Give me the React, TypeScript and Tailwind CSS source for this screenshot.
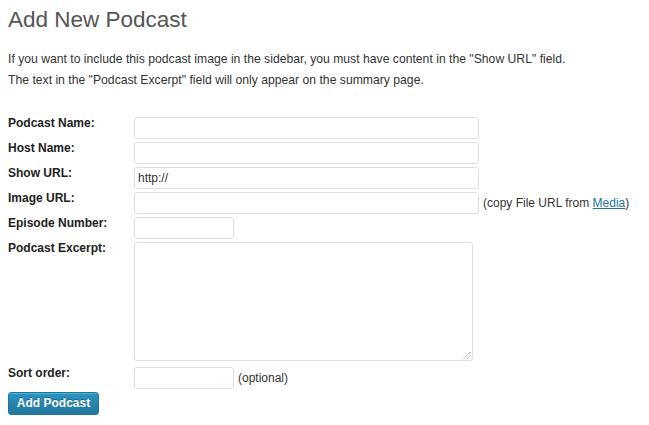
import React from "react";

const inputCls =
  "h-[22px] rounded-[3px] border border-[#dfdfdf] bg-white px-[3px] text-[12px] text-[#333] outline-none";

function Row({
  label,
  children,
  className = "h-[25px]",
}: {
  label: string;
  children: React.ReactNode;
  className?: string;
}) {
  return (
    <div className={`flex items-start ${className}`}>
      <div className="w-[126px] shrink-0 text-[12px] font-bold leading-[16px] text-[#222]">
        {label}
      </div>
      <div className="mt-[2px] flex items-center">{children}</div>
    </div>
  );
}

export default function App() {
  return (
    <div className="min-h-screen bg-white pl-[8px] font-['Liberation_Sans',Arial,sans-serif] text-[#333]">
      <h2 className="pt-[5px] text-[22.5px] font-normal leading-[29px] text-[#555]">
        Add New Podcast
      </h2>

      <div className="mt-[15px] text-[12.2px] leading-[21px]">
        <p>
          If you want to include this podcast image in the sidebar, you must have
          content in the "Show URL" field.
        </p>
        <p>The text in the "Podcast Excerpt" field will only appear on the summary page.</p>
      </div>

      <form className="mt-[24px]" onSubmit={(e) => e.preventDefault()}>
        <Row label="Podcast Name:">
          <input className={`${inputCls} w-[345px]`} />
        </Row>
        <Row label="Host Name:">
          <input className={`${inputCls} w-[345px]`} />
        </Row>
        <Row label="Show URL:">
          <input className={`${inputCls} w-[345px]`} defaultValue="http://" />
        </Row>
        <Row label="Image URL:">
          <input className={`${inputCls} w-[345px]`} />
          <span className="ml-[4px] text-[12px] text-[#333]">
            (copy File URL from{" "}
            <a href="#" className="text-[#21759b] underline">
              Media
            </a>
            )
          </span>
        </Row>
        <Row label="Episode Number:">
          <input className={`${inputCls} w-[100px]`} />
        </Row>
        <Row label="Podcast Excerpt:" className="h-[125px]">
          <div className="relative">
            <textarea className="block h-[119px] w-[339px] resize-none rounded-[3px] border border-[#dfdfdf] bg-white p-[3px] text-[12px] outline-none" />
            <svg
              className="pointer-events-none absolute bottom-[2px] right-[2px]"
              width="8"
              height="8"
              viewBox="0 0 8 8"
            >
              <line x1="1" y1="7.5" x2="7.5" y2="1" stroke="#555" strokeWidth="1" strokeDasharray="1 1" />
              <line x1="4.5" y1="7.5" x2="7.5" y2="4.5" stroke="#555" strokeWidth="1" strokeDasharray="1 1" />
            </svg>
          </div>
        </Row>
        <Row label="Sort order:">
          <input className={`${inputCls} w-[100px]`} />
          <span className="ml-[4px] text-[12px] text-[#333]">(optional)</span>
        </Row>

        <button
          type="submit"
          className="mt-[1px] h-[23px] w-[91px] rounded-[3px] border border-[#21759b] bg-gradient-to-b from-[#2a95c5] to-[#21759b] text-[12px] font-bold text-white shadow-[inset_0_1px_0_rgba(120,200,230,0.5)] [text-shadow:0_-1px_0_rgba(0,0,0,0.3)]"
        >
          Add Podcast
        </button>
      </form>
    </div>
  );
}
